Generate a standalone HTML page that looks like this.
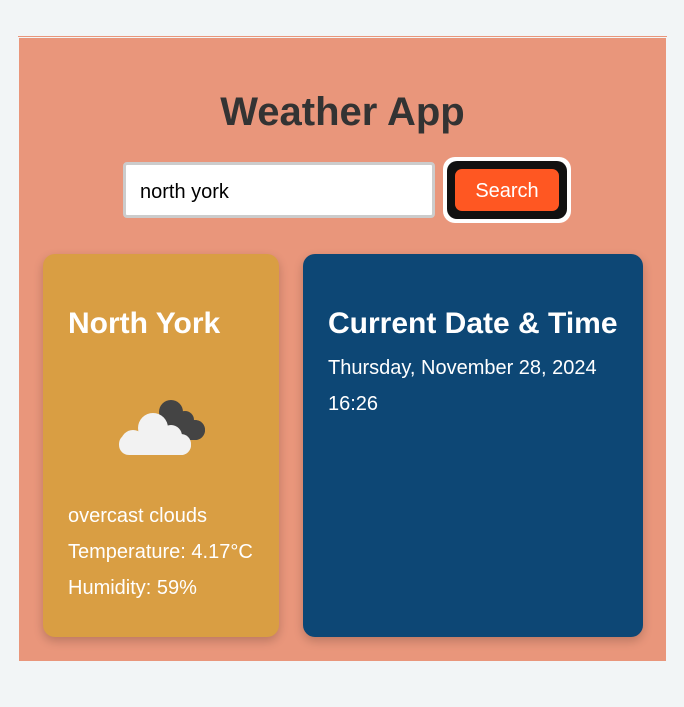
<!DOCTYPE html>
<html><head><style>
body{margin:0;background:#f2f5f6;width:684px;height:707px;position:relative;font-family:"Liberation Sans",Arial,sans-serif;overflow:hidden}
.line{position:absolute;left:18px;top:36px;width:649px;height:1px;background:#e9967a}
.app{position:absolute;left:19px;top:38px;width:647px;height:623px;background:#e9967b}
.t{position:absolute;white-space:nowrap}
h1{position:absolute;margin:0;left:0;width:647px;text-align:center;top:52px;font-size:40px;line-height:44px;color:#333;font-weight:bold}
.inp{position:absolute;left:104px;top:124px;width:306px;height:50px;background:#fff;border:3px solid #ccc;border-radius:4px}
.ring{position:absolute;left:424px;top:119px;width:128px;height:66px;background:#fff;border-radius:12px}
.blk{position:absolute;left:4px;top:4px;width:120px;height:58px;background:#111;border-radius:10px}
.btn{position:absolute;left:8px;top:8px;width:104px;height:42px;background:#ff5722;border-radius:7px;color:#fff;font-size:20px;line-height:45px;text-align:center}
.card{position:absolute;top:216px;height:383px;border-radius:12px;box-shadow:0 4px 10px rgba(0,0,0,0.2);color:#fff}
.c1{left:24px;width:236px;background:#d99e43}
.c2{left:284px;width:340px;background:#0d4775}
.h{font-size:30px;font-weight:bold;left:25px;top:53px}
.p{font-size:20px;left:25px}
</style></head><body>
<div class="line"></div>
<div class="app">
<h1>Weather App</h1>
<div class="inp"><span class="t" style="left:14px;top:16px;font-size:20px;color:#000">north york</span></div>
<div class="ring"><div class="blk"><div class="btn">Search</div></div></div>
<div class="card c1">
<div class="t h">North York</div>
<svg style="position:absolute;left:70px;top:136px" width="100" height="70" viewBox="0 0 100 70">
<g fill="#444">
<circle cx="58" cy="22" r="12"/><circle cx="72" cy="30" r="9"/><circle cx="82" cy="40" r="10"/><rect x="50" y="30" width="42" height="20" rx="10"/>
</g>
<g fill="#f2f2f2">
<circle cx="40" cy="38" r="15"/><circle cx="58" cy="46" r="11"/><circle cx="20" cy="52" r="12"/><rect x="6" y="44" width="72" height="21" rx="10"/><circle cx="68" cy="55" r="10"/>
</g>
</svg>
<div class="t p" style="top:251px">overcast clouds</div>
<div class="t p" style="top:287px">Temperature: 4.17°C</div>
<div class="t p" style="top:323px">Humidity: 59%</div>
</div>
<div class="card c2">
<div class="t h">Current Date &amp; Time</div>
<div class="t p" style="top:103px">Thursday, November 28, 2024</div>
<div class="t p" style="top:139px">16:26</div>
</div>
</div>
</body></html>
